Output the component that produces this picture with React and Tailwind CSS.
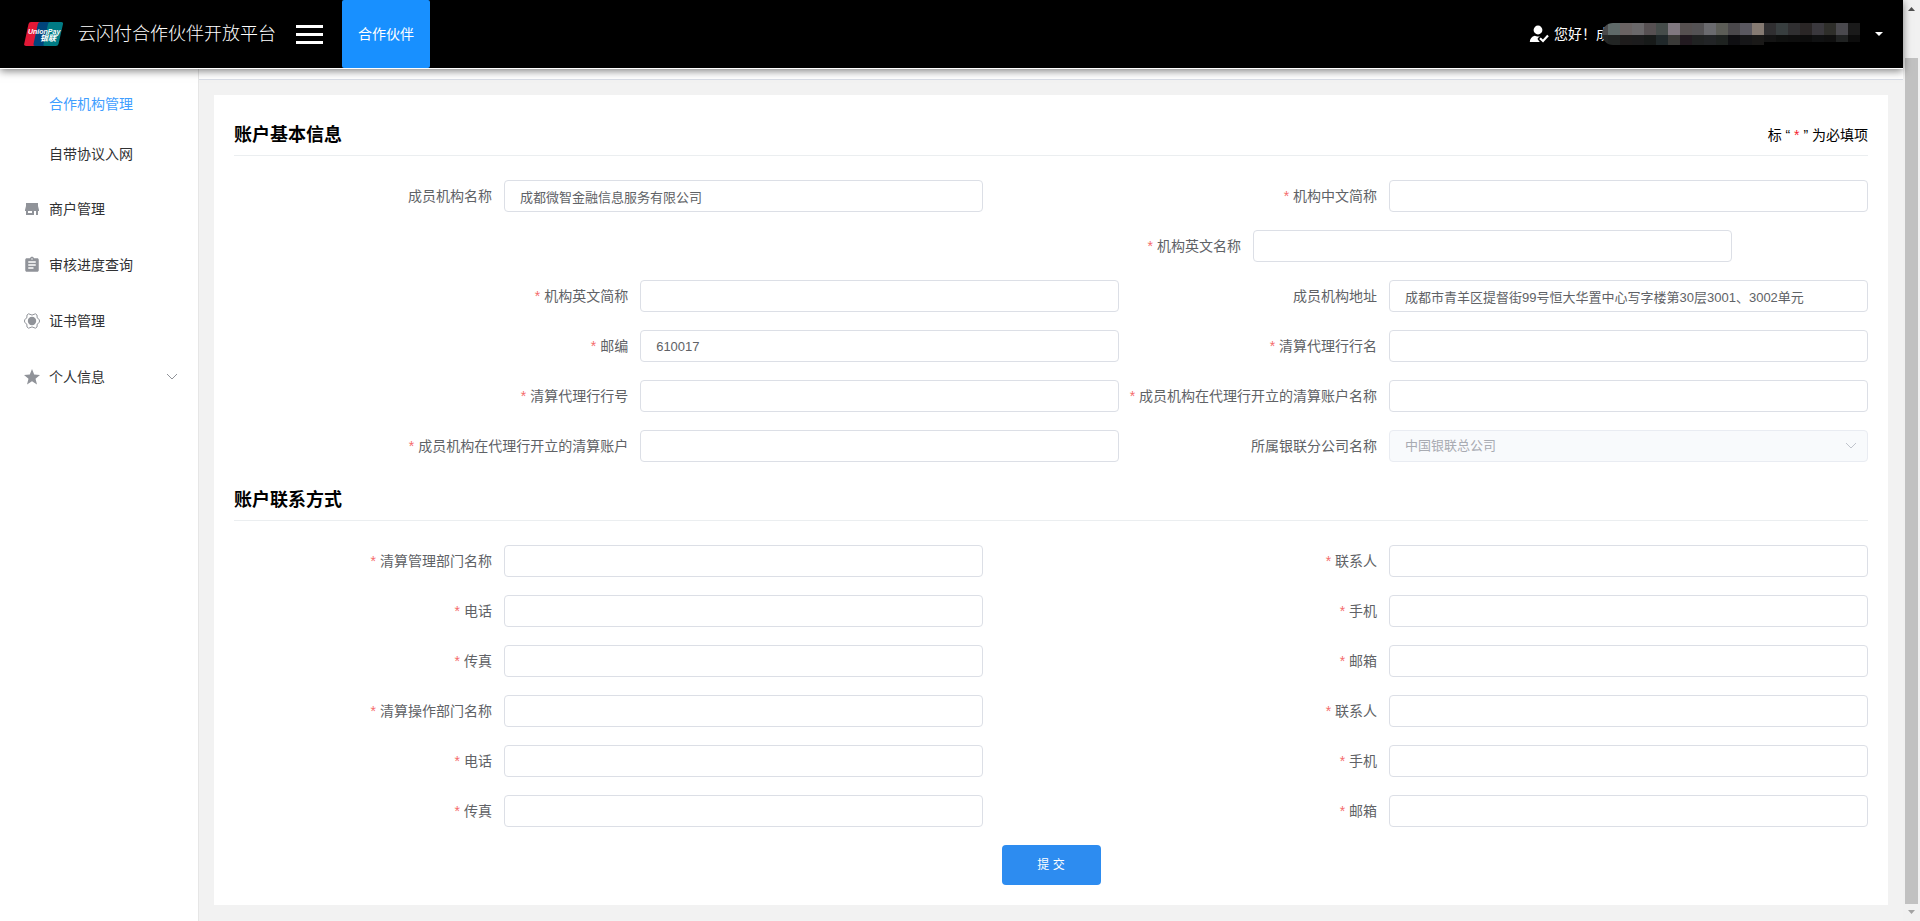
import React, { useState } from 'react';
import { MdAssignment } from 'react-icons/md';

const StoreIcon = () => (
  <svg className="h-4 w-4" viewBox="0 0 16 16" fill="currentColor">
    <path d="M2 2h12v3l1 4v1h-1v4h-2v-4h-2v4H2v-4H1V9l1-4zM4 10v2h4v-2z" fillRule="evenodd" />
  </svg>
);

const CertIcon = () => (
  <svg className="h-4 w-4" viewBox="0 0 16 16" fill="none">
    <circle cx="8" cy="8" r="4.2" fill="currentColor" />
    <path
      d="M4.6.8Q8 3.4 11.4.8L13 2Q12.2 5.4 15.4 6.700V9.300Q12.200 10.600 13 14L11.400 15.200Q8 12.600 4.600 15.200L3 14Q3.800 10.600.6 9.300V6.700Q3.800 5.400 3 2Z"
      stroke="currentColor"
      strokeWidth="1"
    />
  </svg>
);

const StarIcon = () => (
  <svg className="h-4 w-4" viewBox="0 0 16 16" fill="currentColor">
    <path d="M8 0l2.2 5.6 5.8.3-4.5 3.8 1.5 5.9L8 12.3l-5 3.3 1.5-5.9L0 5.9l5.8-.3z" />
  </svg>
);

const ChevronDown = ({ className }) => (
  <svg className={className} viewBox="0 0 12 12" fill="none" stroke="currentColor">
    <path d="M1 3L6 8L11 3" />
  </svg>
);

const UserCheckIcon = () => (
  <svg className="h-5 w-5" viewBox="0 0 20 20" fill="#fff">
    <circle cx="9" cy="6" r="4.4" />
    <path d="M.8 18c0-3.2 2-5.4 5-6.2 1.6.9 3.6 1 5.2.2l-2 2c-.6.8-.4 1.4.2 2l1.6 2z" />
    <path d="M11 14.2l3 2.8 5-5.4" fill="none" stroke="#fff" strokeWidth="2.2" />
  </svg>
);

const UnionPayLogo = () => (
  <svg className="h-6 w-[39px]" viewBox="0 0 39 24">
    <path d="M7 0h11l-5 24H2Q-.2 24 .2 22L4.500 2Q5 0 7 0z" fill="#e21836" />
    <path d="M16 0h13l-5 24H11q-2 0-1.500-2L13.800 2Q14.300 0 16 0z" fill="#00447c" />
    <path d="M26 0h11q2.400 0 2 2l-4.500 20q-.5 2-2.500 2H21q-2 0-1.500-2L24 2q.5-2 2-2z" fill="#007b84" />
    <text x="4" y="12" fill="#fff" fontSize="7" fontWeight="700" fontStyle="italic" fontFamily="Liberation Sans, sans-serif">
      UnionPay
    </text>
    <text x="16" y="19" fill="#fff" fontSize="8" fontWeight="700" fontStyle="italic" fontFamily="Noto Sans CJK SC, sans-serif">
      银联
    </text>
  </svg>
);

// Colours of the blocks that hide the account name
const MASK_TOP = ['#4a4a4c', '#5f6a69', '#6a6363', '#6a686a', '#565052', '#454c4a', '#807880', '#565050', '#545254', '#6a6a6e', '#5c5d57', '#4a484b', '#5a5860', '#857a72', '#302f31', '#383e3f', '#302f31', '#2a2626', '#3a383d', '#2e2e2a', '#4a494e', '#1a1a1a'];
const MASK_BOTTOM = ['#262828', '#222524', '#1e1c1c', '#1c1c1d', '#171a19', '#20282a', '#3a3a38', '#221a20', '#202222', '#222426', '#1e2220', '#0f0f12', '#161618', '#1a1918', '#141414', '#0f100f', '#0e0e0e', '#0c0c0c', '#101112', '#0f0f0f', '#202222', '#0c0c0c'];

const MaskedName = () => (
  <svg className="-ml-2 h-[22px] w-[258px] rounded-l-full" viewBox="0 0 258 22">
    {MASK_TOP.map((color, i) => (
      <rect key={i} x={i * 12 - 6} y="0" width="12" height="12" fill={color} />
    ))}
    {MASK_BOTTOM.map((color, i) => (
      <rect key={i} x={i * 12 - 6} y="12" width="12" height={i > 13 ? 7 : 10} fill={color} />
    ))}
  </svg>
);

const Header = () => (
  <header className="relative z-10 flex h-[69px] items-center border-b border-white bg-black pl-6 pr-5 text-white shadow-[0_2px_8px_rgba(0,0,0,0.5)]">
    <UnionPayLogo />
    <h1 className="ml-[15px] text-lg font-light">云闪付合作伙伴开放平台</h1>
    <button type="button" aria-label="菜单" className="ml-5 flex w-[27px] flex-col gap-[5px]">
      <span className="h-[3px] w-full bg-white" />
      <span className="h-[3px] w-full bg-white" />
      <span className="h-[3px] w-full bg-white" />
    </button>
    <a href="#partner" className="ml-[19px] flex h-full w-[88px] items-center justify-center rounded-xs bg-[#1890ff] text-sm">
      合作伙伴
    </a>
    <button type="button" className="ml-auto flex items-center text-sm">
      <UserCheckIcon />
      <span className="ml-[5px] whitespace-nowrap">您好！成</span>
      <MaskedName />
      <svg className="ml-[15px] h-1 w-2" viewBox="0 0 8 4" fill="#fff">
        <path d="M0 0h8L4 4z" />
      </svg>
    </button>
  </header>
);

const SUB_ITEMS = ['合作机构管理', '自带协议入网'];

const MENU_ITEMS = [
  { label: '商户管理', icon: <StoreIcon /> },
  { label: '审核进度查询', icon: <MdAssignment size={18} /> },
  { label: '证书管理', icon: <CertIcon /> },
  { label: '个人信息', icon: <StarIcon />, expandable: true },
];

const Sidebar = () => (
  <nav className="flex w-[199px] shrink-0 flex-col gap-0.5 border-r border-[#e6e6e6] bg-white pt-[10px] text-sm text-[#303133]">
    <div>
      {SUB_ITEMS.map((label, i) => (
        <a
          key={label}
          href="#sub"
          className={`flex h-[50px] items-center pl-[49px] ${i === 0 ? 'text-[#409eff]' : ''}`}
        >
          {label}
        </a>
      ))}
    </div>
    <div>
      {MENU_ITEMS.map(({ label, icon, expandable }) => (
        <a key={label} href="#menu" className="flex h-14 items-center px-5">
          <span className="flex w-6 justify-center text-[#909399]">{icon}</span>
          <span className="ml-[5px]">{label}</span>
          {expandable && <ChevronDown className="ml-auto h-3 w-3 text-[#909399]" />}
        </a>
      ))}
    </div>
  </nav>
);

const BASIC_FIELDS = [
  { id: 'orgName', label: '成员机构名称', value: '成都微智金融信息服务有限公司', start: 'col-start-1' },
  { id: 'orgShortCn', label: '机构中文简称', required: true, start: 'col-start-14' },
  { id: 'orgNameEn', label: '机构英文名称', required: true, start: 'col-start-12' },
  { id: 'orgShortEn', label: '机构英文简称', required: true, start: 'col-start-3' },
  { id: 'orgAddress', label: '成员机构地址', value: '成都市青羊区提督街99号恒大华置中心写字楼第30层3001、3002单元', start: 'col-start-14' },
  { id: 'postcode', label: '邮编', value: '610017', required: true, start: 'col-start-3' },
  { id: 'agentBankName', label: '清算代理行行名', required: true, start: 'col-start-14' },
  { id: 'agentBankNo', label: '清算代理行行号', required: true, start: 'col-start-3' },
  { id: 'accountName', label: '成员机构在代理行开立的清算账户名称', required: true, start: 'col-start-14' },
  { id: 'account', label: '成员机构在代理行开立的清算账户', required: true, start: 'col-start-3' },
  { id: 'branch', label: '所属银联分公司名称', options: ['中国银联总公司'], start: 'col-start-14' },
];

const CONTACT_FIELDS = [
  { id: 'manageDept', label: '清算管理部门名称' },
  { id: 'manageContact', label: '联系人' },
  { id: 'managePhone', label: '电话' },
  { id: 'manageMobile', label: '手机' },
  { id: 'manageFax', label: '传真' },
  { id: 'manageEmail', label: '邮箱' },
  { id: 'operateDept', label: '清算操作部门名称' },
  { id: 'operateContact', label: '联系人' },
  { id: 'operatePhone', label: '电话' },
  { id: 'operateMobile', label: '手机' },
  { id: 'operateFax', label: '传真' },
  { id: 'operateEmail', label: '邮箱' },
].map((field, i) => ({ ...field, required: true, start: i % 2 ? 'col-start-14' : 'col-start-1' }));

const FormField = ({ field, value, onChange }) => (
  <div className={`col-span-11 flex h-8 items-center ${field.start}`}>
    <label htmlFor={field.id} className="w-[270px] shrink-0 whitespace-nowrap pr-3 text-right text-sm text-[#606266]">
      {field.required && <span className="mr-1 text-[#f56c6c]">*</span>}
      {field.label}
    </label>
    {field.options ? (
      <div className="relative min-w-0 flex-1">
        <select
          id={field.id}
          disabled
          className="block h-8 w-full appearance-none rounded border border-[#e9ecf2] bg-[#f8fafc] px-[15px] text-[13px] text-[#a8abb2] opacity-100"
        >
          {field.options.map((option) => (
            <option key={option}>{option}</option>
          ))}
        </select>
        <ChevronDown className="pointer-events-none absolute right-[11px] top-[10px] h-3 w-3 text-[#c0c4cc]" />
      </div>
    ) : (
      <input
        id={field.id}
        type="text"
        value={value}
        onChange={(e) => onChange(field.id, e.target.value)}
        className="h-8 min-w-0 flex-1 rounded border border-[#dcdfe6] bg-white px-[15px] text-[13px] text-[#606266]"
      />
    )}
  </div>
);

const FormSection = ({ title, note, fields, values, onChange }) => (
  <section>
    <div className="flex h-[41px] items-center justify-between border-b border-[#ebeef0] text-black">
      <h2 className="text-lg font-bold">{title}</h2>
      {note}
    </div>
    <div className="mt-6 grid grid-cols-[repeat(24,minmax(0,1fr))] gap-y-[18px]">
      {fields.map((field) => (
        <FormField key={field.id} field={field} value={values[field.id] || ''} onChange={onChange} />
      ))}
    </div>
  </section>
);

const AccountForm = () => {
  const [values, setValues] = useState(() =>
    Object.fromEntries(BASIC_FIELDS.map((field) => [field.id, field.value || '']))
  );

  const handleChange = (id, value) => setValues((prev) => ({ ...prev, [id]: value }));

  return (
    <form onSubmit={(e) => e.preventDefault()} className="m-[15px] flex flex-col gap-[18px] bg-white p-5">
      <FormSection
        title="账户基本信息"
        note={
          <p className="text-sm">
            标 “ <span className="text-[#f5222d]">*</span> ” 为必填项
          </p>
        }
        fields={BASIC_FIELDS}
        values={values}
        onChange={handleChange}
      />
      <FormSection title="账户联系方式" fields={CONTACT_FIELDS} values={values} onChange={handleChange} />
      <button type="submit" className="h-10 w-[99px] self-center rounded bg-[#2d8cf0] text-xs text-white">
        提 交
      </button>
    </form>
  );
};

const Scrollbar = () => (
  <div className="flex w-[17px] shrink-0 flex-col items-center bg-[#f1f1f1]">
    <svg className="h-[17px] w-[17px] shrink-0" viewBox="0 0 17 17" fill="#505050">
      <path d="M5 11h7L8.500 7z" />
    </svg>
    <div className="mt-[41px] w-[13px] flex-1 bg-[#c1c1c1]" />
    <svg className="h-[17px] w-[17px] shrink-0" viewBox="0 0 17 17" fill="#a3a3a3">
      <path d="M5 6h7L8.500 10z" />
    </svg>
  </div>
);

const App = () => (
  <div className="flex min-h-screen bg-[#f2f2f2] font-['Liberation_Sans','Noto_Sans_CJK_SC',sans-serif]">
    <div className="flex min-w-0 flex-1 flex-col">
      <Header />
      <div className="flex flex-1">
        <Sidebar />
        <main className="min-w-0 flex-1">
          <div className="h-[11px] border-b border-[#d8dce5] bg-white" />
          <AccountForm />
        </main>
      </div>
    </div>
    <Scrollbar />
  </div>
);

export default App;
